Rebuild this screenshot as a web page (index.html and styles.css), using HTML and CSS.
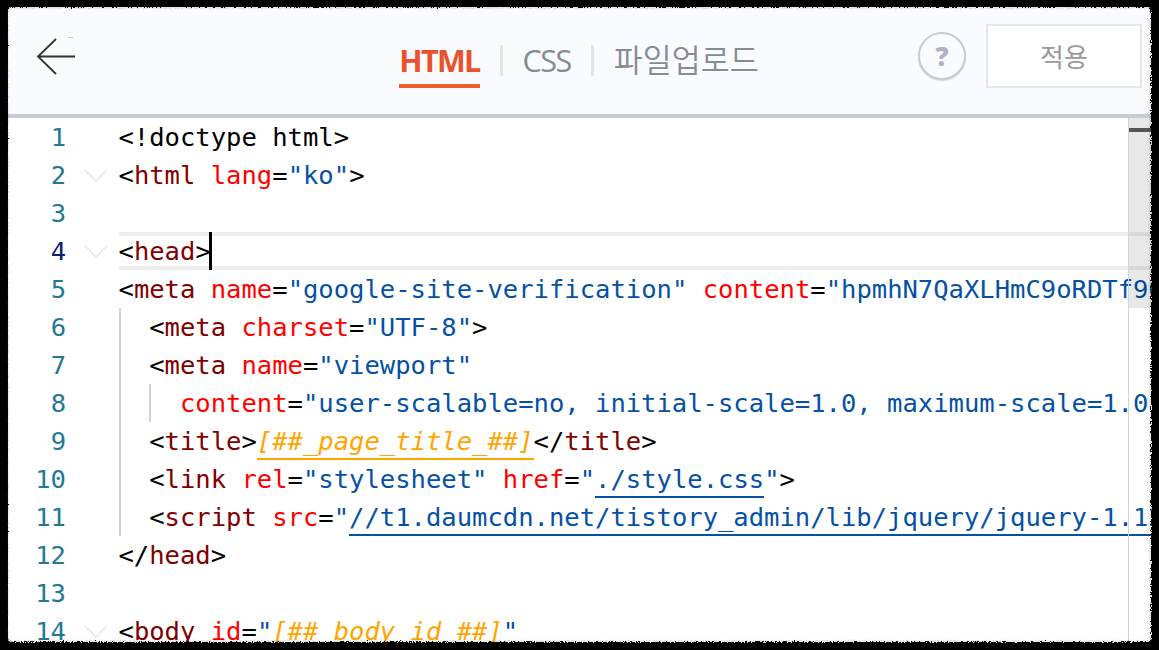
FILE: index.html
```html
<!DOCTYPE html>
<html lang="ko">
<head>
<meta charset="utf-8">
<title>HTML 편집</title>
<link rel="stylesheet" href="styles.css">
</head>
<body>
<div class="app">
  <header class="topbar">
    <div class="back">
      <svg width="40" height="42" viewBox="0 0 40 42"><path d="M19 3 1 20.500 19 38M1 20.500H38" fill="none" stroke="#333" stroke-width="1.800"/><path d="M31 1.500h5" stroke="#ccc" stroke-width="1"/></svg>
    </div>
    <nav class="tabs">
      <span class="tab active">HTML</span><i class="sep"></i><span class="tab">CSS</span><i class="sep"></i><span class="tab upload">파일업로드</span>
    </nav>
    <div class="actions">
      <span class="help">?</span>
      <span class="apply">적용</span>
    </div>
  </header>
  <main class="editor">
    <div class="row"><span class="num">1</span><span class="fold"></span><code class="code"><b>&lt;!doctype html&gt;</b></code></div>
    <div class="row"><span class="num">2</span><span class="fold"><svg class="chev" viewBox="0 0 24 13"><path d="M1 1l11 11L23 1"/></svg></span><code class="code"><b>&lt;</b><u>html</u> <s>lang</s><b>=</b><em>"ko"</em><b>&gt;</b></code></div>
    <div class="row"><span class="num">3</span><span class="fold"></span><code class="code"></code></div>
    <div class="row current"><span class="num">4</span><span class="fold"><svg class="chev" viewBox="0 0 24 13"><path d="M1 1l11 11L23 1"/></svg></span><code class="code"><b>&lt;</b><u>head</u><b>&gt;</b><i class="caret"></i></code></div>
    <div class="row"><span class="num">5</span><span class="fold"></span><code class="code"><b>&lt;</b><u>meta</u> <s>name</s><b>=</b><em>"google-site-verification"</em> <s>content</s><b>=</b><em>"hpmhN7QaXLHmC9oRDTf9Q"</em></code></div>
    <div class="row"><span class="num">6</span><span class="fold"></span><code class="code"><i class="indent"></i><b>&lt;</b><u>meta</u> <s>charset</s><b>=</b><em>"UTF-8"</em><b>&gt;</b></code></div>
    <div class="row"><span class="num">7</span><span class="fold"></span><code class="code"><i class="indent"></i><b>&lt;</b><u>meta</u> <s>name</s><b>=</b><em>"viewport"</em></code></div>
    <div class="row"><span class="num">8</span><span class="fold"></span><code class="code"><i class="indent"></i><i class="indent"></i><s>content</s><b>=</b><em>"user-scalable=no, initial-scale=1.0, maximum-scale=1.0, minimum-scale=1.0"</em></code></div>
    <div class="row"><span class="num">9</span><span class="fold"></span><code class="code"><i class="indent"></i><b>&lt;</b><u>title</u><b>&gt;</b><a class="var">[##_page_title_##]</a><b>&lt;/</b><u>title</u><b>&gt;</b></code></div>
    <div class="row"><span class="num">10</span><span class="fold"></span><code class="code"><i class="indent"></i><b>&lt;</b><u>link</u> <s>rel</s><b>=</b><em>"stylesheet"</em> <s>href</s><b>=</b><em>"<a class="link">./style.css</a>"</em><b>&gt;</b></code></div>
    <div class="row"><span class="num">11</span><span class="fold"></span><code class="code"><i class="indent"></i><b>&lt;</b><u>script</u> <s>src</s><b>=</b><em>"<a class="link">//t1.daumcdn.net/tistory_admin/lib/jquery/jquery-1.12.4.min.js</a>"</em></code></div>
    <div class="row"><span class="num">12</span><span class="fold"></span><code class="code"><b>&lt;/</b><u>head</u><b>&gt;</b></code></div>
    <div class="row"><span class="num">13</span><span class="fold"></span><code class="code"></code></div>
    <div class="row"><span class="num">14</span><span class="fold"><svg class="chev" viewBox="0 0 24 13"><path d="M1 1l11 11L23 1"/></svg></span><code class="code"><b>&lt;</b><u>body</u> <s>id</s><b>=</b><em>"</em><a class="var">[##_body_id_##]</a><em>"</em></code></div>
    <div class="ruler"><span class="thumb"><i class="mark"></i></span></div>
  </main>
</div>
<div class="frame"></div>
<svg class="defs" width="0" height="0"><filter id="rough" x="-2%" y="-2%" width="104%" height="104%"><feTurbulence type="fractalNoise" baseFrequency="0.7" numOctaves="2" seed="3"/><feDisplacementMap in="SourceGraphic" scale="5" xChannelSelector="R" yChannelSelector="G"/></filter></svg>
</body>
</html>
```
FILE: styles.css
```css
* { box-sizing: border-box; }
html, body { margin: 0; height: 100%; }
body { background: #000; overflow: hidden; padding: 7px 7px 7px 8px; }
.app { height: 636px; background: #fff; overflow: hidden; display: flex; flex-direction: column; }

.topbar {
  flex: none; height: 111px; background: #fafbfe; border-bottom: 4px solid #c5ccd8;
  display: grid; grid-template-columns: 1fr auto 1fr; align-items: center;
}
.back { padding: 0 0 0 29px; height: 42px; margin-top: -8px; }
.back svg { display: block; }
.tabs { display: flex; align-items: center; height: 100%; transform: translateX(-1px); }
.tab { font: 400 30.5px/52px "Open Sans", "Noto Sans CJK KR", sans-serif; letter-spacing: -1.5px; color: #868b94; height: 54px; }
.tab.upload { font: 350 31.5px/48px "Noto Sans CJK KR", sans-serif; letter-spacing: 0; }
.tab.active { color: #e9522c; font-weight: 700; letter-spacing: -1.7px; border-bottom: 4px solid #ee5e2e; }
.sep { width: 3px; height: 31px; background: #e5e5e5; margin: 0 20px; }
.actions { display: flex; align-items: center; justify-content: flex-end; gap: 20px; padding-right: 10px; margin-bottom: 9px; }
.help {
  width: 48px; height: 48px; border-radius: 50%; border: 2px solid #c5ccd8; background: #fafbfe;
  box-shadow: 0 1px 1px rgba(120, 130, 150, .3);
  display: flex; align-items: center; justify-content: center;
  font: 800 26px/1 "Open Sans", sans-serif; color: #adb4c4;
}
.apply {
  width: 156px; height: 64px; background: #fff; border: 2px solid #e3e6ee;
  display: flex; align-items: center; justify-content: center;
  font: 400 26px/1 "Noto Sans CJK KR", sans-serif; color: #9a9a9a;
}

.editor { flex: 1; position: relative; overflow: hidden; font-family: "DejaVu Sans Mono", monospace; font-size: 25.54px; }
.row { display: flex; height: 38px; line-height: 38px; white-space: pre; }
.num { flex: none; width: 58px; text-align: right; color: #237893; }
.current .num { color: #0b216f; }
.fold { flex: none; width: 52.500px; padding: 13px 0 0 18px; }
.chev { display: block; width: 24px; height: 13px; }
.chev path { fill: none; stroke: #e6e6e6; stroke-width: 1.500; }
.code { flex: 1; min-width: 0; overflow: hidden; font: inherit; position: relative; }
.current .code { border-top: 4px solid #eeeeee; border-bottom: 4px solid #eeeeee; line-height: 30px; overflow: visible; }
.code b { font-weight: 400; color: #000; }
.code u { text-decoration: none; color: #800000; }
.code s { text-decoration: none; color: #ff0000; }
.code em { font-style: normal; color: #0451a5; }
.var { font-style: italic; color: #ffa500; border-bottom: 2px solid #ffa500; padding-bottom: 2px; }
.link { color: #0451a5; border-bottom: 2px solid #0451a5; padding-bottom: 2px; }
.indent { display: inline-block; width: 2ch; height: 38px; vertical-align: top; box-shadow: inset 2px 0 #d3d3d3; }
.caret { display: inline-block; width: 3px; height: 38px; margin: -4px 0 0 -2px; background: #000; vertical-align: top; }

.ruler { position: absolute; top: 0; bottom: 0; left: 1120px; width: 24px; border-left: 1px solid #d4d4d4; }
.thumb { display: block; height: 190px; background: rgba(0, 0, 0, .09); padding-top: 10px; }
.mark { display: block; height: 4px; background: #555; }

.frame {
  position: fixed; inset: 0; pointer-events: none;
  border-style: solid; border-color: #000; border-width: 7px 8px 8px 7px; border-radius: 12px;
  box-shadow: inset 0 0 3px rgba(60, 60, 60, .45);
  filter: url(#rough);
}
.defs { position: absolute; }
```
